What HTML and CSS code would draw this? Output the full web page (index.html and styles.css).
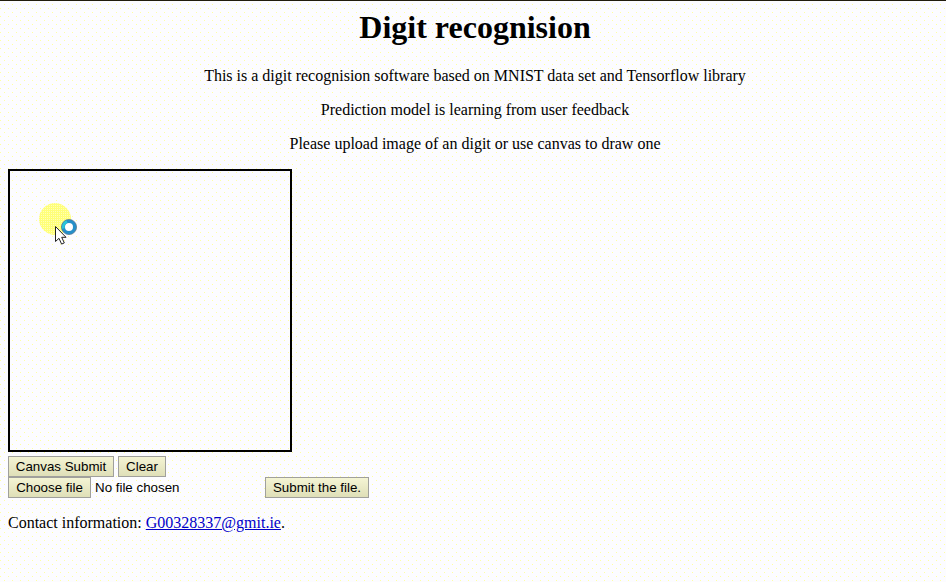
FILE: index.html
```html
<!DOCTYPE html>
<html lang="en">
<head>
<meta charset="utf-8">
<title>Digit recognision</title>
<link rel="stylesheet" href="styles.css">
</head>
<body>
<header class="intro">
<h1>Digit recognision</h1>
<p>This is a digit recognision software based on MNIST data set and Tensorflow library</p>
<p>Prediction model is learning from user feedback</p>
<p>Please upload image of an digit or use canvas to draw one</p>
</header>
<main>
<div class="canvas">
<span class="spot"></span>
<svg class="cursor" width="26" height="30" viewBox="0 0 26 30">
<path d="M1.5 9.5v15l3.5-3.2 2.6 5.8 2.7-1.2-2.6-5.6h4.3z" fill="#fff" stroke="#222"/>
<circle cx="15" cy="10" r="5.8" fill="#fff" stroke="#258fc9" stroke-width="3.6"/>
<path d="M9.4 11.5A5.8 5.8 0 0 1 13 4.5" fill="none" stroke="#28c5d8" stroke-width="3"/>
<circle cx="15" cy="10" r="7.6" fill="none" stroke="#58718a" stroke-width=".7"/>
</svg>
</div>
<div class="row">
<button class="btn submit">Canvas Submit</button>
<button class="btn clear">Clear</button>
</div>
<div class="row">
<button class="btn choose">Choose file</button>
<span class="file">No file chosen</span>
<button class="btn send">Submit the file.</button>
</div>
</main>
<footer>Contact information: <a href="#">G00328337@gmit.ie</a>.</footer>
</body>
</html>
```
FILE: styles.css
```css
html {
  height: 100%;
  overflow: hidden;
  background-color: #fcfcff;
  background-image:
    conic-gradient(from 270deg at 1px 1px, #ffffa0 90deg, transparent 0),
    conic-gradient(from 270deg at 1px 1px, #ffffa0 90deg, transparent 0);
  background-size: 8px 8px;
  background-position: 0 0, 4px 4px;
}
body {
  box-sizing: border-box;
  width: 946px;
  height: 582px;
  margin: 0;
  padding: 8px 4px 0 8px;
  border-top: 1px solid #211c0c;
  font: 16px/18px "Liberation Serif", serif;
  color: #000;
}
.intro { text-align: center; }
h1 { margin: 0 0 22px; font-size: 32px; line-height: 36px; }
p { margin: 0 0 16px; }
.canvas {
  position: relative;
  box-sizing: border-box;
  width: 284px;
  height: 283px;
  margin-bottom: 4px;
  border: 2px solid #000;
}
.spot {
  position: absolute;
  left: 29px;
  top: 32px;
  width: 32px;
  height: 32px;
  border-radius: 50%;
  background: conic-gradient(from 270deg at 1px 1px, #ffffb8 90deg, #ffff78 0) 0 0 / 2px 2px;
}
.cursor { position: absolute; left: 44px; top: 46px; }
.row {
  display: flex;
  align-items: center;
  height: 21px;
  font: 13.333px "Liberation Sans", sans-serif;
}
.btn {
  box-sizing: border-box;
  height: 21px;
  margin: 0;
  padding: 0;
  border: 1px solid #a0a09c;
  background: linear-gradient(#f4f4d4, #dfdfb8);
  font: inherit;
  color: #000;
}
.submit { width: 106px; margin-right: 4px; }
.clear { width: 48px; }
.choose { width: 83px; margin-right: 4px; }
.file { width: 170px; }
.send { width: 104px; }
footer { margin-top: 16px; }
a { color: #0000c8; }
```
